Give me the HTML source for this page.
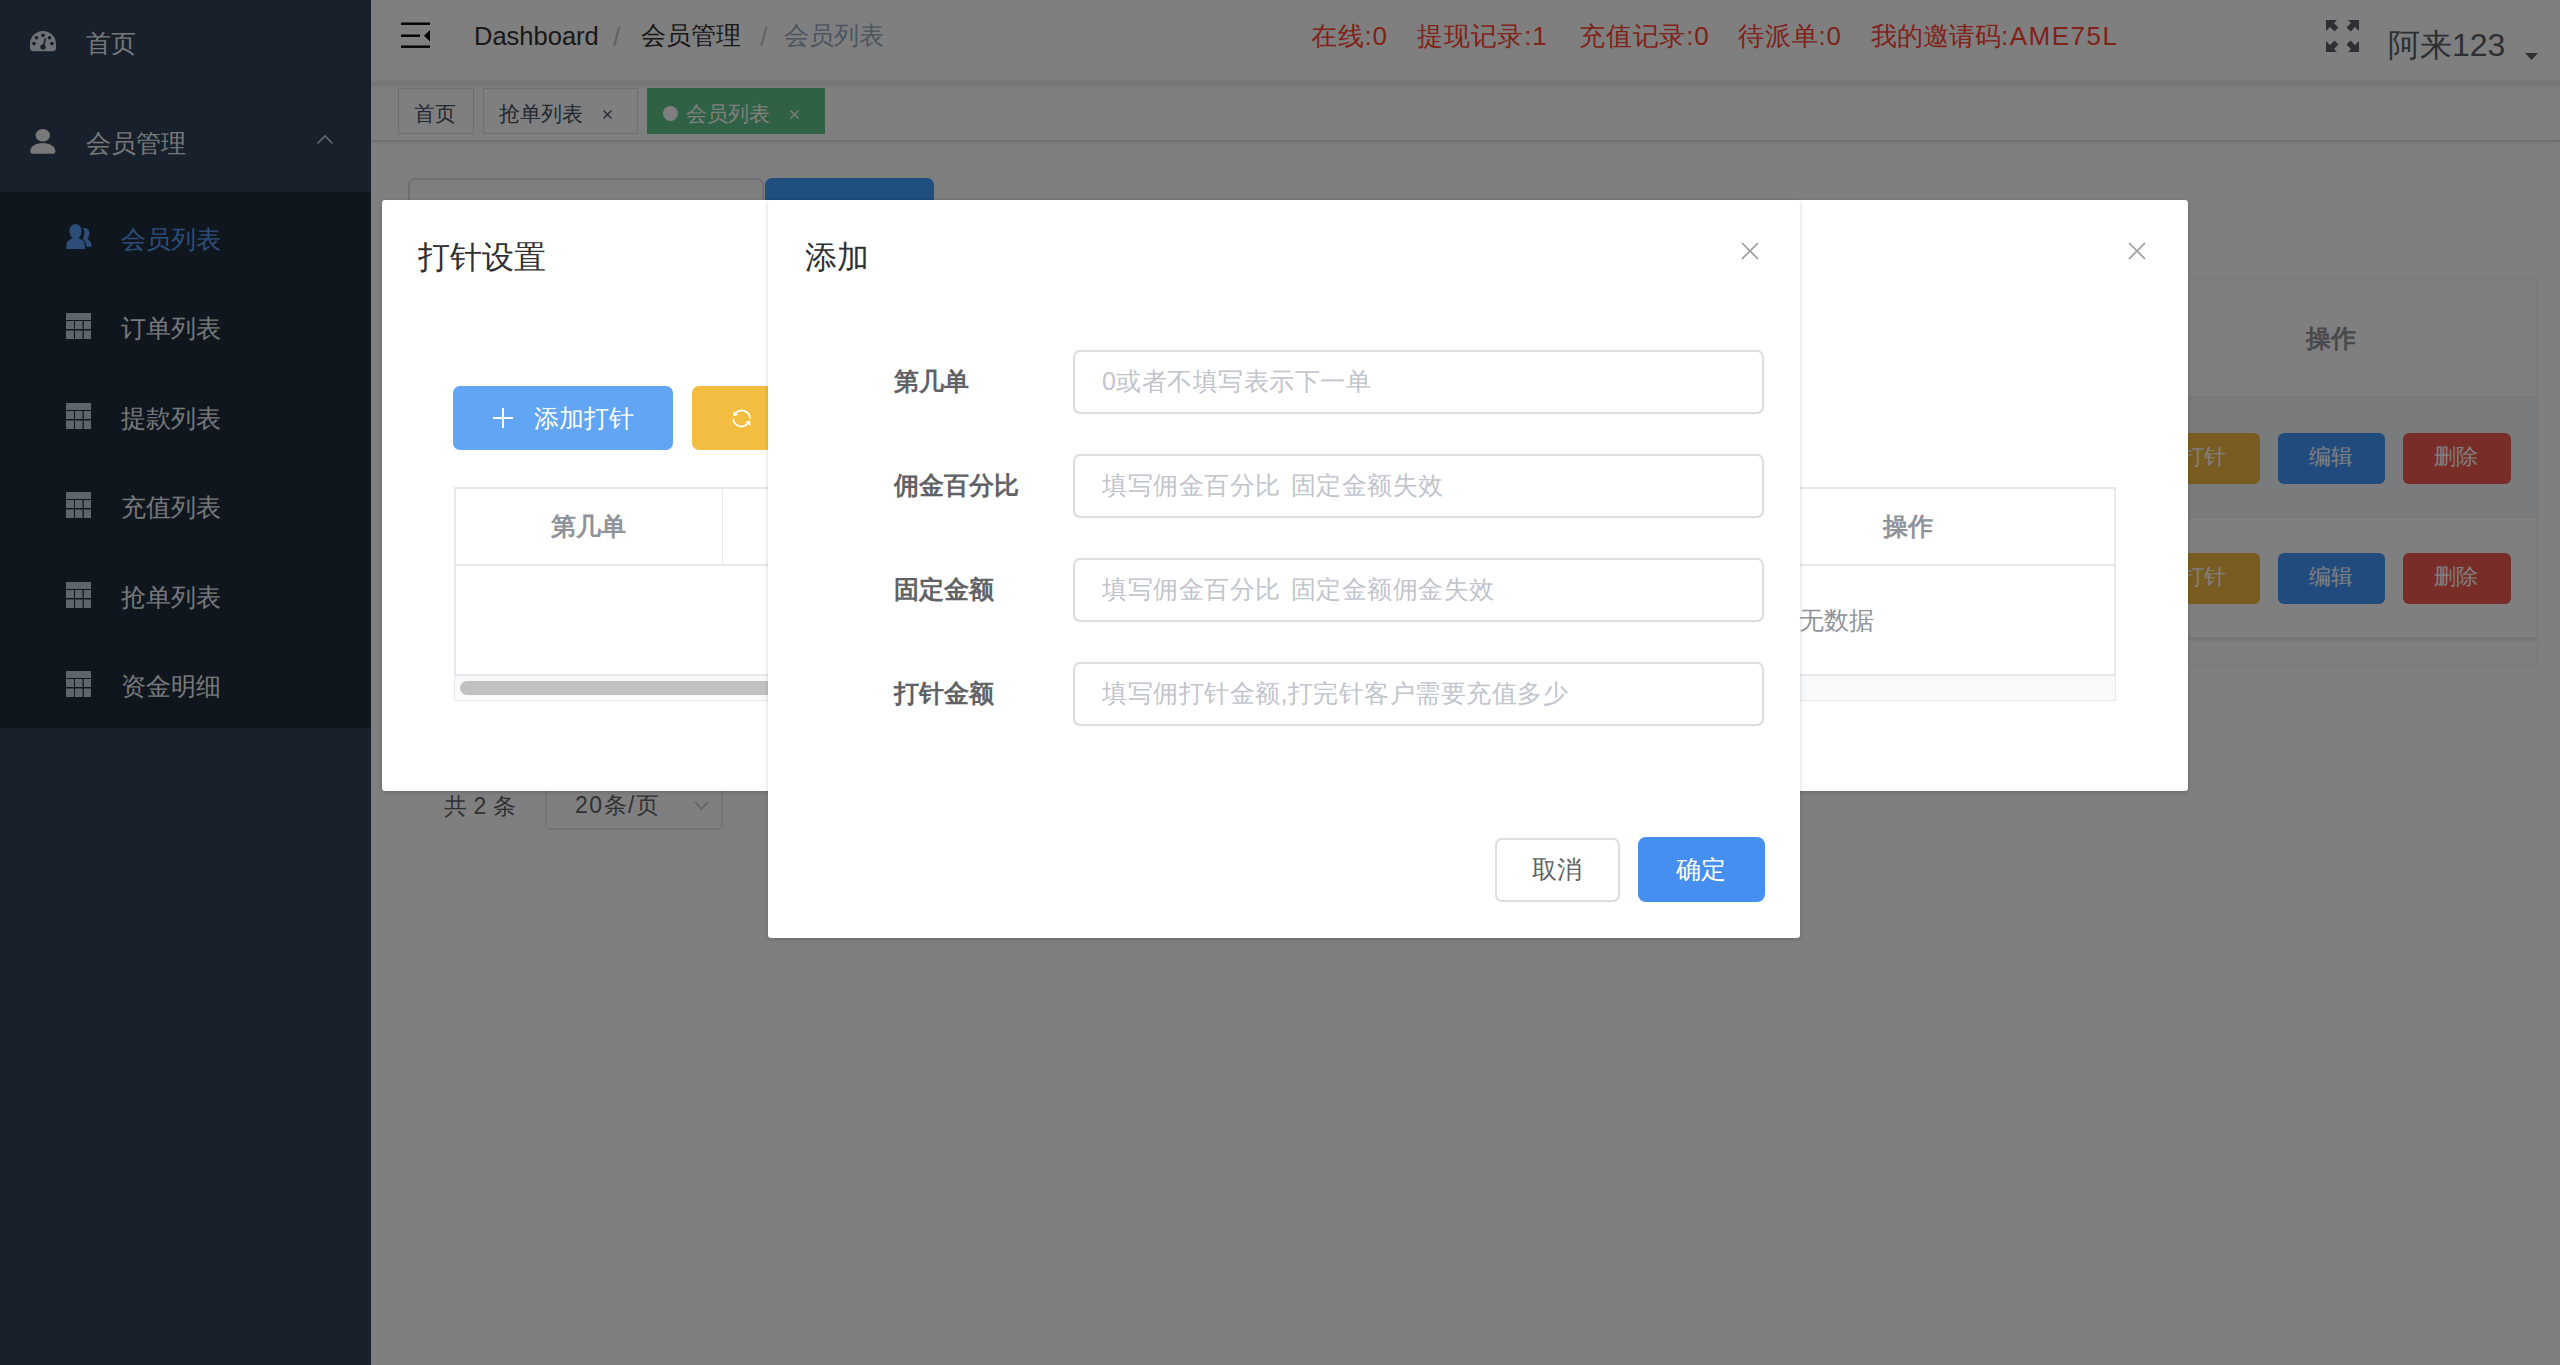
<!DOCTYPE html>
<html><head><meta charset="utf-8">
<style>
*{box-sizing:border-box;margin:0;padding:0}
html,body{width:2560px;height:1365px;overflow:hidden;background:#fff;font-family:"Liberation Sans",sans-serif;}
.abs{position:absolute}
.t{position:absolute;white-space:nowrap;line-height:1}
.ls{letter-spacing:1.5px}
/* sidebar */
#side{left:0;top:0;width:371px;height:1365px;background:#304156}
#sub{left:0;top:192px;width:371px;height:536px;background:#1f2d3d}
.side-t{color:#eef0f3;font-size:25px}
/* main */
#nav{left:371px;top:0;width:2189px;height:82px;background:#fff;box-shadow:0 1px 5px rgba(0,21,41,.14)}
#tags{left:371px;top:82px;width:2189px;height:59px;background:#fff;border-bottom:1px solid #d8dce5;box-shadow:0 1px 3px 0 rgba(0,0,0,.12),0 0 3px 0 rgba(0,0,0,.04)}
.tag{position:absolute;top:88px;height:46px;border:1px solid #d8dce5;background:#fff;color:#495060;font-size:21px}
#mask{left:0;top:0;width:2560px;height:1365px;background:rgba(0,0,0,.5)}
.dlg{position:absolute;background:#fff;border-radius:3px;box-shadow:0 1px 4px rgba(0,0,0,.18)}
.inp{position:absolute;left:1073px;width:691px;height:64px;border:2px solid #dcdcdf;border-radius:7px;background:#fff}
.lbl{position:absolute;font-size:25px;font-weight:bold;color:#606266;line-height:1;white-space:nowrap}
.ph{position:absolute;font-size:25px;letter-spacing:0.5px;word-spacing:3px;color:#c0c4cc;line-height:1;white-space:nowrap}
</style></head><body>
<!-- SIDEBAR -->
<div id="side" class="abs"></div>
<div id="sub" class="abs"></div>
<!-- gauge icon -->
<svg class="abs" style="left:30px;top:31px" width="26" height="21" viewBox="0 0 26 21">
<path d="M13 0A13 13 0 0 0 0 13V16.5Q0 20.3 3.5 20.3H22.5Q26 20.3 26 16.5V13A13 13 0 0 0 13 0Z" fill="#dde3ec"/>
<circle cx="13" cy="4.3" r="1.8" fill="#304156"/><circle cx="6.5" cy="6.8" r="1.8" fill="#304156"/><circle cx="19.5" cy="6.8" r="1.8" fill="#304156"/>
<circle cx="4" cy="12.6" r="1.8" fill="#304156"/><circle cx="22" cy="12.6" r="1.8" fill="#304156"/>
<path d="M15.4 7.8L13.6 14.5" stroke="#304156" stroke-width="1.5" stroke-linecap="round"/><circle cx="13" cy="15.9" r="2.6" fill="#304156"/>
</svg>
<div class="t side-t" style="left:86px;top:31px">首页</div>
<!-- person icon -->
<svg class="abs" style="left:30px;top:129px" width="26" height="25" viewBox="0 0 26 25">
<ellipse cx="12.8" cy="6.3" rx="7.2" ry="6.3" fill="#f0f0f0"/>
<path d="M0.3 22.5C0.3 17.5 5.5 14 12.8 14S25.4 17.5 25.4 22.5Q25.4 24.8 23 24.8H2.7Q0.3 24.8 0.3 22.5Z" fill="#f0f0f0"/>
</svg>
<div class="t side-t" style="left:86px;top:131px">会员管理</div>
<svg class="abs" style="left:316px;top:134px" width="18" height="11" viewBox="0 0 18 11"><path d="M1.5 9.5L9 2L16.5 9.5" stroke="#d0d6de" stroke-width="1.6" fill="none"/></svg>
<!-- users icon -->
<svg class="abs" style="left:66px;top:224px" width="27" height="26" viewBox="0 0 27 26">
<path d="M17 4.5C18 4 19.5 4 20.5 4.2C22.5 4.8 23.5 7.5 23.3 10C23.2 12 22.3 13.8 21.3 14.8C23.5 16 25.5 18.5 25.8 22.7H20.5C20 19 18.5 16.5 16.5 15C17.8 13.5 18.3 11 18.3 8C18.3 6.5 17.8 5.5 17 4.5Z" fill="#5a9cf0"/>
<path d="M9.5 0C13 0 15.5 3 15.5 7C15.5 10.5 14 13 12.5 14.3C16.5 15.5 19 18 19 22V25H0.4V22C0.4 18 3 15.5 6.5 14.3C5 13 3.5 10.5 3.5 7C3.5 3 6 0 9.5 0Z" fill="#5a9cf0" stroke="#1f2d3d" stroke-width="1.5" paint-order="stroke"/>
</svg>
<div class="t side-t" style="left:121px;top:227px;color:#5a9cf0">会员列表</div>
<svg class="abs" style="left:66px;top:313px" width="26" height="26" viewBox="0 0 26 26"><g fill="#bfcbd9"><rect x="0" y="0" width="25" height="7"/><rect x="0" y="8" width="8" height="8"/><rect x="9" y="8" width="7.5" height="8"/><rect x="17.8" y="8" width="7.2" height="8"/><rect x="0" y="17.5" width="8" height="8.5"/><rect x="9" y="17.5" width="7.5" height="8.5"/><rect x="17.8" y="17.5" width="7.2" height="8.5"/></g></svg>
<div class="t side-t" style="left:121px;top:316px">订单列表</div>
<svg class="abs" style="left:66px;top:403px" width="26" height="26" viewBox="0 0 26 26"><g fill="#bfcbd9"><rect x="0" y="0" width="25" height="7"/><rect x="0" y="8" width="8" height="8"/><rect x="9" y="8" width="7.5" height="8"/><rect x="17.8" y="8" width="7.2" height="8"/><rect x="0" y="17.5" width="8" height="8.5"/><rect x="9" y="17.5" width="7.5" height="8.5"/><rect x="17.8" y="17.5" width="7.2" height="8.5"/></g></svg>
<div class="t side-t" style="left:121px;top:406px">提款列表</div>
<svg class="abs" style="left:66px;top:492px" width="26" height="26" viewBox="0 0 26 26"><g fill="#bfcbd9"><rect x="0" y="0" width="25" height="7"/><rect x="0" y="8" width="8" height="8"/><rect x="9" y="8" width="7.5" height="8"/><rect x="17.8" y="8" width="7.2" height="8"/><rect x="0" y="17.5" width="8" height="8.5"/><rect x="9" y="17.5" width="7.5" height="8.5"/><rect x="17.8" y="17.5" width="7.2" height="8.5"/></g></svg>
<div class="t side-t" style="left:121px;top:495px">充值列表</div>
<svg class="abs" style="left:66px;top:582px" width="26" height="26" viewBox="0 0 26 26"><g fill="#bfcbd9"><rect x="0" y="0" width="25" height="7"/><rect x="0" y="8" width="8" height="8"/><rect x="9" y="8" width="7.5" height="8"/><rect x="17.8" y="8" width="7.2" height="8"/><rect x="0" y="17.5" width="8" height="8.5"/><rect x="9" y="17.5" width="7.5" height="8.5"/><rect x="17.8" y="17.5" width="7.2" height="8.5"/></g></svg>
<div class="t side-t" style="left:121px;top:585px">抢单列表</div>
<svg class="abs" style="left:66px;top:671px" width="26" height="26" viewBox="0 0 26 26"><g fill="#bfcbd9"><rect x="0" y="0" width="25" height="7"/><rect x="0" y="8" width="8" height="8"/><rect x="9" y="8" width="7.5" height="8"/><rect x="17.8" y="8" width="7.2" height="8"/><rect x="0" y="17.5" width="8" height="8.5"/><rect x="9" y="17.5" width="7.5" height="8.5"/><rect x="17.8" y="17.5" width="7.2" height="8.5"/></g></svg>
<div class="t side-t" style="left:121px;top:674px">资金明细</div>

<!-- NAVBAR -->
<div id="nav" class="abs"></div>
<div id="tags" class="abs"></div>
<div class="abs" style="left:371px;top:79px;width:2189px;height:9px;background:linear-gradient(rgba(0,0,0,0),rgba(0,0,0,.09) 60%,rgba(0,0,0,0))"></div>
<!-- hamburger -->
<svg class="abs" style="left:401px;top:22px" width="30" height="26" viewBox="0 0 30 26">
<rect x="0" y="0.5" width="29" height="2.4" fill="#000"/><rect x="0" y="12.5" width="19" height="2.4" fill="#000"/><rect x="0" y="23.5" width="29" height="2.4" fill="#000"/>
<path d="M29 8L23 13.7L29 19.4Z" fill="#000"/>
</svg>
<div class="t" style="left:474px;top:24px;font-size:25.5px;color:#303133">Dashboard</div>
<div class="t" style="left:613px;top:24px;font-size:26px;color:#c0c4cc">/</div>
<div class="t" style="left:641px;top:23px;font-size:25px;color:#303133">会员管理</div>
<div class="t" style="left:760px;top:24px;font-size:26px;color:#c0c4cc">/</div>
<div class="t" style="left:784px;top:23px;font-size:25px;color:#97a8be">会员列表</div>
<div class="t" style="left:1311px;top:23px;font-size:26px;color:#ff4433;letter-spacing:0.8px">在线:0</div>
<div class="t" style="left:1417px;top:23px;font-size:26px;color:#ff4433;letter-spacing:0.8px">提现记录:1</div>
<div class="t" style="left:1579px;top:23px;font-size:26px;color:#ff4433;letter-spacing:0.8px">充值记录:0</div>
<div class="t" style="left:1738px;top:23px;font-size:26px;color:#ff4433;letter-spacing:0.8px">待派单:0</div>
<div class="t" style="left:1871px;top:23px;font-size:26px;color:#ff4433">我的邀请码<span class="ls">:AME75L</span></div>
<!-- fullscreen -->
<svg class="abs" style="left:2326px;top:20px" width="33" height="32" viewBox="0 0 33 32">
<g fill="#5a5e66">
<path d="M0 0H11L8 3L12.5 7.5L8.5 11.5L4 7L0 11Z"/>
<path d="M33 0H22L25 3L20.5 7.5L24.5 11.5L29 7L33 11Z"/>
<path d="M0 32H11L8 29L12.5 24.5L8.5 20.5L4 25L0 21Z"/>
<path d="M33 32H22L25 29L20.5 24.5L24.5 20.5L29 25L33 21Z"/>
</g></svg>
<div class="t" style="left:2388px;top:29px;font-size:32px;color:#5a5e66">阿来123</div>
<svg class="abs" style="left:2525px;top:53px" width="13" height="7" viewBox="0 0 13 7"><path d="M0 0H13L6.5 7Z" fill="#5a5e66"/></svg>
<!-- tags -->
<div class="tag" style="left:398px;width:76px"></div>
<div class="t" style="left:414px;top:103px;font-size:21px;color:#495060">首页</div>
<div class="tag" style="left:483px;width:155px"></div>
<div class="t" style="left:499px;top:103px;font-size:21px;color:#495060">抢单列表</div>
<svg class="abs" style="left:603px;top:110px" width="9" height="9" viewBox="0 0 9 9"><path d="M0.5 0.5L8.5 8.5M8.5 0.5L0.5 8.5" stroke="#495060" stroke-width="1.3"/></svg>
<div class="tag" style="left:647px;width:178px;background:#5fc389;border-color:#5fc389"></div>
<div class="abs" style="left:663px;top:106px;width:15px;height:15px;border-radius:50%;background:#fff"></div>
<div class="t" style="left:686px;top:103px;font-size:21px;color:#fff">会员列表</div>
<svg class="abs" style="left:790px;top:110px" width="9" height="9" viewBox="0 0 9 9"><path d="M0.5 0.5L8.5 8.5M8.5 0.5L0.5 8.5" stroke="#fff" stroke-width="1.3"/></svg>
<!-- background page -->
<div class="abs" style="left:408px;top:178px;width:356px;height:64px;border:2px solid #dcdfe6;border-radius:7px;background:#fff"></div>
<div class="abs" style="left:765px;top:178px;width:169px;height:64px;border-radius:7px;background:#409EFF"></div>
<!-- bg table -->
<div class="abs" style="left:408px;top:278px;width:2130px;height:388px;border:1px solid #ebeef5;background:#fff"></div>
<div class="abs" style="left:409px;top:397px;width:2128px;height:1px;background:#ebeef5"></div>
<div class="abs" style="left:409px;top:398px;width:2128px;height:120px;background:#f5f7fa"></div>
<div class="abs" style="left:409px;top:517px;width:2128px;height:1px;background:#ebeef5"></div>
<div class="abs" style="left:409px;top:637px;width:2128px;height:1px;background:#ebeef5"></div>
<div class="abs" style="left:409px;top:638px;width:2128px;height:4px;background:linear-gradient(rgba(0,0,0,.12),rgba(0,0,0,0))"></div>
<div class="t" style="left:2306px;top:326px;font-size:25px;font-weight:bold;color:#909399">操作</div>
<div class="abs btnw" style="left:2140px;top:433px;width:120px;height:51px;border-radius:6px;background:#f2b844"></div>
<div class="abs" style="left:2278px;top:433px;width:107px;height:51px;border-radius:6px;background:#4596fa"></div>
<div class="abs" style="left:2403px;top:433px;width:108px;height:51px;border-radius:6px;background:#f25a52"></div>
<div class="t" style="left:2182px;top:446px;font-size:22px;color:#fff">打针</div>
<div class="t" style="left:2309px;top:446px;font-size:22px;color:#fff">编辑</div>
<div class="t" style="left:2434px;top:446px;font-size:22px;color:#fff">删除</div>
<div class="abs" style="left:2140px;top:553px;width:120px;height:51px;border-radius:6px;background:#f2b844"></div>
<div class="abs" style="left:2278px;top:553px;width:107px;height:51px;border-radius:6px;background:#4596fa"></div>
<div class="abs" style="left:2403px;top:553px;width:108px;height:51px;border-radius:6px;background:#f25a52"></div>
<div class="t" style="left:2182px;top:566px;font-size:22px;color:#fff">打针</div>
<div class="t" style="left:2309px;top:566px;font-size:22px;color:#fff">编辑</div>
<div class="t" style="left:2434px;top:566px;font-size:22px;color:#fff">删除</div>
<!-- pagination -->
<div class="t" style="left:444px;top:795px;font-size:23px;color:#606266">共 2 条</div>
<div class="abs" style="left:545px;top:770px;width:178px;height:60px;border:2px solid #e6e8ec;border-radius:5px;background:#fff"></div>
<div class="t" style="left:575px;top:794px;font-size:23px;color:#606266;letter-spacing:1.5px">20条/页</div>
<svg class="abs" style="left:694px;top:801px" width="15" height="9" viewBox="0 0 15 9"><path d="M1 1L7.5 8L14 1" stroke="#c0c4cc" stroke-width="1.5" fill="none"/></svg>

<!-- MASK -->
<div id="mask" class="abs"></div>

<!-- DIALOG 1 -->
<div class="dlg" style="left:382px;top:200px;width:1806px;height:591px"></div>
<div class="t" style="left:418px;top:241px;font-size:32px;color:#303133">打针设置</div>
<svg class="abs" style="left:2128px;top:242px" width="18" height="18" viewBox="0 0 18 18"><path d="M1 1L17 17M17 1L1 17" stroke="#9a9da3" stroke-width="1.7"/></svg>
<div class="abs" style="left:453px;top:386px;width:220px;height:64px;border-radius:7px;background:#62a5f5"></div>
<svg class="abs" style="left:493px;top:408px" width="20" height="20" viewBox="0 0 20 20"><path d="M10 0V20M0 10H20" stroke="#fff" stroke-width="2"/></svg>
<div class="t" style="left:534px;top:406px;font-size:25px;color:#fff">添加打针</div>
<div class="abs" style="left:692px;top:386px;width:120px;height:64px;border-radius:7px;background:#f3bd41"></div>
<svg class="abs" style="left:731px;top:408px" width="21" height="21" viewBox="0 0 21 21"><g fill="none" stroke="#fff" stroke-width="1.7" stroke-linecap="round"><path d="M4.6 5.2A8.3 8.3 0 0 1 19 9.8"/><path d="M2.3 11.5A8.3 8.3 0 0 0 16.2 16.2"/></g><path d="M2.2 3.2L7.3 6.8L2.6 8.3Z M19.6 17.8L14.2 14.3L19 12.6Z" fill="#fff"/></svg>
<!-- d1 table -->
<div class="abs" style="left:454px;top:487px;width:1662px;height:214px;border:2px solid #e6e8ec;background:#fff"></div>
<div class="abs" style="left:455px;top:564px;width:1660px;height:2px;background:#e6e8ec"></div>
<div class="abs" style="left:722px;top:488px;width:1px;height:77px;background:#e6e8ec"></div>
<div class="abs" style="left:455px;top:674px;width:1660px;height:26px;background:#f8f9fa;border-top:2px solid #e6e8ec"></div>
<div class="abs" style="left:460px;top:681px;width:1300px;height:14px;border-radius:7px;background:#c1c1c1"></div>
<div class="t" style="left:551px;top:514px;font-size:25px;font-weight:bold;color:#909399">第几单</div>
<div class="t" style="left:1883px;top:514px;font-size:25px;font-weight:bold;color:#909399">操作</div>
<div class="t" style="left:1774px;top:608px;font-size:25px;color:#909399">暂无数据</div>

<!-- DIALOG 2 -->
<div class="dlg" style="left:768px;top:200px;width:1032px;height:738px"></div>
<div class="t" style="left:805px;top:241px;font-size:32px;color:#303133">添加</div>
<svg class="abs" style="left:1741px;top:242px" width="18" height="18" viewBox="0 0 18 18"><path d="M1 1L17 17M17 1L1 17" stroke="#9a9da3" stroke-width="1.7"/></svg>
<div class="lbl" style="left:894px;top:369px">第几单</div>
<div class="inp" style="top:350px"></div>
<div class="ph" style="left:1102px;top:369px">0或者不填写表示下一单</div>
<div class="lbl" style="left:894px;top:473px">佣金百分比</div>
<div class="inp" style="top:454px"></div>
<div class="ph" style="left:1102px;top:473px">填写佣金百分比 固定金额失效</div>
<div class="lbl" style="left:894px;top:577px">固定金额</div>
<div class="inp" style="top:558px"></div>
<div class="ph" style="left:1102px;top:577px">填写佣金百分比 固定金额佣金失效</div>
<div class="lbl" style="left:894px;top:681px">打针金额</div>
<div class="inp" style="top:662px"></div>
<div class="ph" style="left:1102px;top:681px">填写佣打针金额,打完针客户需要充值多少</div>
<div class="abs" style="left:1495px;top:838px;width:125px;height:64px;border:2px solid #dcdcdf;border-radius:7px;background:#fff"></div>
<div class="t" style="left:1532px;top:857px;font-size:25px;color:#606266">取消</div>
<div class="abs" style="left:1638px;top:837px;width:127px;height:65px;border-radius:8px;background:#458ff0"></div>
<div class="t" style="left:1676px;top:857px;font-size:25px;color:#fff">确定</div>

</body></html>
